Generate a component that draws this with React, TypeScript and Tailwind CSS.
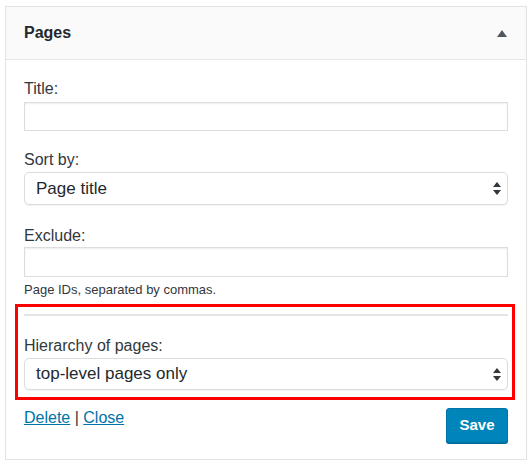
const font = { fontFamily: '"Liberation Sans", Arial, sans-serif' };

const SortArrows = () => (
  <svg width="8" height="13" viewBox="0 0 8 13" className="shrink-0">
    <path d="M4 0 L8 5 L0 5 Z" fill="#32373c" />
    <path d="M0 8 L8 8 L4 13 Z" fill="#32373c" />
  </svg>
);

const FakeSelect = ({ value, className }: { value: string; className: string }) => (
  <div
    className={`flex items-center justify-between rounded-[5px] border border-[#dcdcdc] bg-white pl-[11px] pr-[6px] text-[17px] text-[#23282d] shadow-[0_1px_1px_rgba(0,0,0,0.05)] ${className}`}
  >
    <span>{value}</span>
    <SortArrows />
  </div>
);

const Label = ({ children, className }: { children: string; className: string }) => (
  <div className={`text-[16px] leading-5 text-[#32373c] ${className}`}>{children}</div>
);

export default function App() {
  return (
    <div className="min-h-[466px] w-[532px] bg-white pl-[5px] pt-[6px]" style={font}>
      <div className="w-[522px] border border-[#e2e2e2] bg-white">
        <div className="flex h-[53px] items-center justify-between border-b border-[#e5e5e5] bg-[#fafafa] pl-[18px] pr-[19px]">
          <h3 className="text-[16px] font-bold text-[#23282d]">Pages</h3>
          <svg width="10" height="7" viewBox="0 0 10 7">
            <path d="M5 0 L10 7 L0 7 Z" fill="#50575e" />
          </svg>
        </div>

        <div className="px-[18px] pt-[19px] pb-[16px]">
          <Label className="">Title:</Label>
          <div className="mt-[3px] h-[29px] border border-[#dddddd] bg-white shadow-[inset_0_1px_2px_rgba(0,0,0,0.07)]" />

          <Label className="mt-[19px]">Sort by:</Label>
          <FakeSelect value="Page title" className="mt-[2px] h-[33px]" />

          <Label className="mt-[21px]">Exclude:</Label>
          <div className="mt-[1px] h-[30px] border border-[#dddddd] bg-white shadow-[inset_0_1px_2px_rgba(0,0,0,0.07)]" />
          <p className="mt-[5px] text-[13px] leading-4 text-[#32373c]">Page IDs, separated by commas.</p>

          <div className="-ml-[9px] -mr-[7px] mt-[6px] border-[3px] border-[#ff0000] pl-[6px] pr-[4px] pt-[7px] pb-[7px]">
            <div className="h-[2px] bg-[#e4e4e4]" />
            <Label className="mt-[20px]">Hierarchy of pages:</Label>
            <FakeSelect value="top-level pages only" className="mt-[2px] h-[32px]" />
          </div>

          <div className="mt-[8px] flex items-start justify-between">
            <div className="text-[16px] leading-5 text-[#32373c]">
              <a className="text-[#0073aa] underline">Delete</a> | <a className="text-[#0073aa] underline">Close</a>
            </div>
            <button className="h-[35px] w-[62px] rounded-[3px] border border-[#0073aa] bg-[#0085ba] text-[15px] font-bold text-white shadow-[0_1px_0_#006799]">
              Save
            </button>
          </div>
        </div>
      </div>
    </div>
  );
}
